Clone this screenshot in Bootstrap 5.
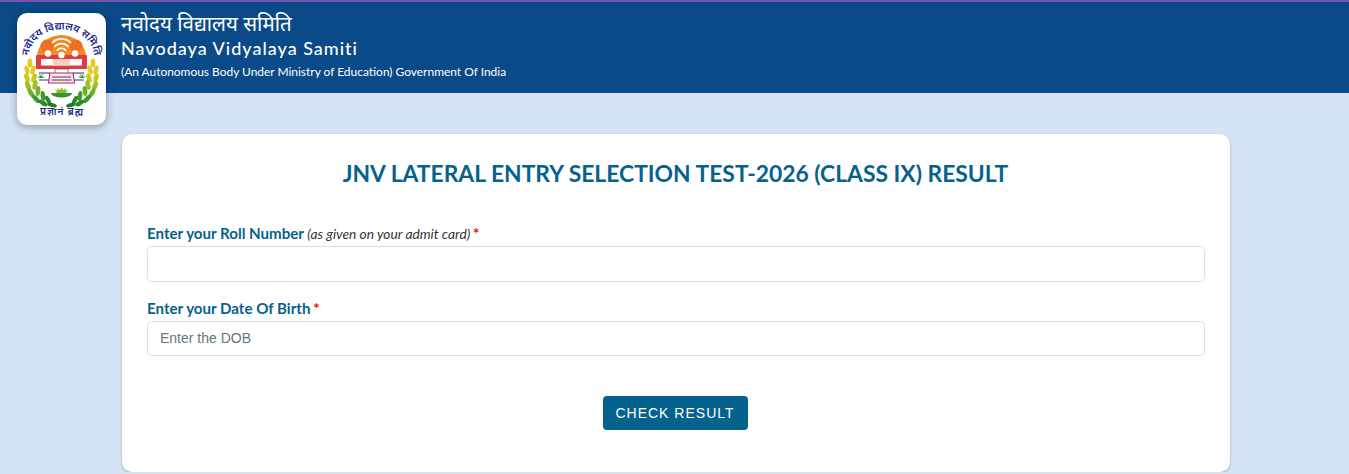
<!DOCTYPE html>
<html lang="en">
<head>
<meta charset="utf-8">
<title>JNV Result</title>
<link href="https://cdn.jsdelivr.net/npm/bootstrap@5.3.0/dist/css/bootstrap.min.css" rel="stylesheet">
<style>
body{background:#d5e4f4;font-family:"Lato","Liberation Sans",sans-serif;margin:0;overflow:hidden}
.site-head{background:#0b4a88;border-top:2px solid #7b52ab;height:93px;padding-left:17px;gap:15px}
.logo-box{width:89px;height:112px;margin-top:11px;background:#fff;border-radius:10px;box-shadow:0 2px 8px rgba(0,0,0,.35);flex:none}
.logo-box svg{display:block;width:89px;height:112px}
.logo-hi{font-family:"Noto Sans","DejaVu Sans",sans-serif;font-weight:600;fill:#1d2b86}
.head-text{color:#fff;padding-top:9px}
.hi-name{font-family:"Noto Sans","DejaVu Sans",sans-serif;font-size:20.5px;line-height:25px;margin:0}
.en-name{font-size:18px;line-height:20px;letter-spacing:1px;margin:2px 0 0;font-weight:500}
.en-sub{font-size:11.95px;line-height:14px;margin:7px 0 0}
.result-box{width:1108px;margin:41px 0 0 122px;height:338px;background:#fff;border-radius:10px;padding:25px;box-shadow:0 1px 3px rgba(0,0,0,.25)}
.result-title{color:#05628c;font-size:22.85px;font-weight:700;line-height:29px;margin:0 0 36px;text-align:center;padding-right:1px}
.fld-label{color:#05628c;font-size:15.1px;font-weight:700;line-height:18px;margin-bottom:3px;display:block}
.fld-label em{color:#333;font-weight:400;font-size:13.75px}
.dob-label{line-height:16px;margin-bottom:5px}
.req{color:#f00;font-weight:700;margin-left:-1px}
.fld-input{height:35.5px;border:1px solid #dcdfe3;border-radius:5px;font-family:"Liberation Sans",sans-serif;font-size:14px;padding:6px 12px;margin-bottom:18px}
.fld-input::placeholder{color:#6c757d}
.btn-wrap{padding-right:2px}
.check-btn{background:#05628c;color:#fff;font-family:"Liberation Sans",sans-serif;font-size:14px;letter-spacing:1px;height:34px;width:145px;padding:0;border:0;border-radius:4px;margin-top:22px}
</style>
</head>
<body>
<header class="site-head d-flex align-items-start">
  <div class="logo-box">
    <svg viewBox="0 0 89 112" xmlns="http://www.w3.org/2000/svg">
      <defs>
        <path id="arcT" d="M12 44A32.500 27.500 0 0 1 77 44"/>
        <g id="wreathSide">
          <ellipse cx="13" cy="50" rx="2.400" ry="4.500" fill="#e8c91f"/>
          <g fill="#e3cb20"><ellipse cx="10" cy="57" rx="2.300" ry="4.600" transform="rotate(-18 10 57)"/><ellipse cx="16" cy="57" rx="2.300" ry="4.600" transform="rotate(18 16 57)"/></g>
          <g fill="#c8c81e"><ellipse cx="10" cy="65" rx="2.400" ry="4.800" transform="rotate(-18 10 65)"/><ellipse cx="17" cy="65" rx="2.400" ry="4.800" transform="rotate(18 17 65)"/></g>
          <g fill="#9cc025"><ellipse cx="11" cy="73" rx="2.400" ry="5" transform="rotate(-22 11 73)"/><ellipse cx="18" cy="72" rx="2.400" ry="5" transform="rotate(14 18 72)"/></g>
          <g fill="#6fb02a"><ellipse cx="14" cy="80" rx="2.400" ry="5" transform="rotate(-30 14 80)"/><ellipse cx="21" cy="78" rx="2.400" ry="5" transform="rotate(6 21 78)"/></g>
          <g fill="#3f9a2a"><ellipse cx="19" cy="86" rx="2.400" ry="5" transform="rotate(-42 19 86)"/><ellipse cx="26" cy="83" rx="2.300" ry="5" transform="rotate(-8 26 83)"/></g>
          <g fill="#2a8a2a"><ellipse cx="26" cy="90" rx="2.300" ry="5" transform="rotate(-58 26 90)"/><ellipse cx="31" cy="87" rx="2.200" ry="4.500" transform="rotate(-30 31 87)"/></g>
          <ellipse cx="35" cy="92" rx="2" ry="5" transform="rotate(-76 35 92)" fill="#1f7a2a"/>
          <path d="M22 60h11M22 67h11" stroke="#26357e" stroke-width="1"/>
          <path d="M20 63l3 1-1-4 2 3 2-3-1 4 3-1-2 2h-4z" fill="#3f8f2f"/>
        </g>
      </defs>
      <use href="#wreathSide"/>
      <use href="#wreathSide" transform="translate(89 0) scale(-1 1)"/>
      <text class="logo-hi" font-size="10.500"><textPath href="#arcT" startOffset="50%" text-anchor="middle" textLength="92">नवोदय विद्यालय समिति</textPath></text>
      <path d="M20 44a24.500 22 0 0 1 49 0z" fill="#f08a24"/>
      <circle cx="30" cy="33" r="6.500" fill="#ee6f1d"/><circle cx="59" cy="33" r="6.500" fill="#ee6f1d"/>
      <path d="M35 30a13 13 0 0 1 19 0M37.500 34a9 9 0 0 1 14 0M40 38a5 5 0 0 1 9 0" fill="none" stroke="#fff" stroke-width="1.600"/>
      <rect x="19" y="42" width="51" height="14" rx="1" fill="#dd3b45"/>
      <rect x="24" y="46" width="41" height="6.500" fill="#fff"/>
      <path d="M36 46h17v6.500H36z" fill="#f6d2bd"/>
      <circle cx="31" cy="40.500" r="3.200" fill="#fff"/><circle cx="44.500" cy="42" r="3.200" fill="#fff"/><circle cx="58" cy="40.500" r="3.200" fill="#fff"/>
      <path d="M38 56h13v5H38z" fill="#fff" stroke="#333" stroke-width=".6"/>
      <path d="M33 60h23l1.500 10h-26z" fill="#fbe6ee" stroke="#b8256f" stroke-width="1.100"/>
      <path d="M35 64h19M34.500 67h20" stroke="#444" stroke-width="1"/>
      <path d="M34 80h21a10.500 4.500 0 0 1-21 0z" fill="#2f9431"/>
      <path d="M38 76l3 2-1-3 3 2 1.500-3 1.500 3 3-2-1 3 3-2-2 4H40z" fill="#8fb82a"/>
      <text class="logo-hi" x="44.500" y="102" text-anchor="middle" font-size="10" textLength="43">प्रज्ञानं ब्रह्म</text>
    </svg>
  </div>
  <div class="head-text">
    <p class="hi-name">नवोदय विद्यालय समिति</p>
    <p class="en-name">Navodaya Vidyalaya Samiti</p>
    <p class="en-sub">(An Autonomous Body Under Ministry of Education) Government Of India</p>
  </div>
</header>
<main class="result-box">
  <h1 class="result-title">JNV LATERAL ENTRY SELECTION TEST-2026 (CLASS IX) RESULT</h1>
  <form>
    <label class="fld-label" for="roll">Enter your Roll Number <em>(as given on your admit card)</em> <span class="req">*</span></label>
    <input id="roll" class="form-control fld-input" type="text">
    <label class="fld-label dob-label" for="dob">Enter your Date Of Birth <span class="req">*</span></label>
    <input id="dob" class="form-control fld-input" type="text" placeholder="Enter the DOB">
    <div class="text-center btn-wrap"><button type="button" class="btn check-btn">CHECK RESULT</button></div>
  </form>
</main>
<script src="https://cdn.jsdelivr.net/npm/bootstrap@5.3.0/dist/js/bootstrap.bundle.min.js"></script>
</body>
</html>
